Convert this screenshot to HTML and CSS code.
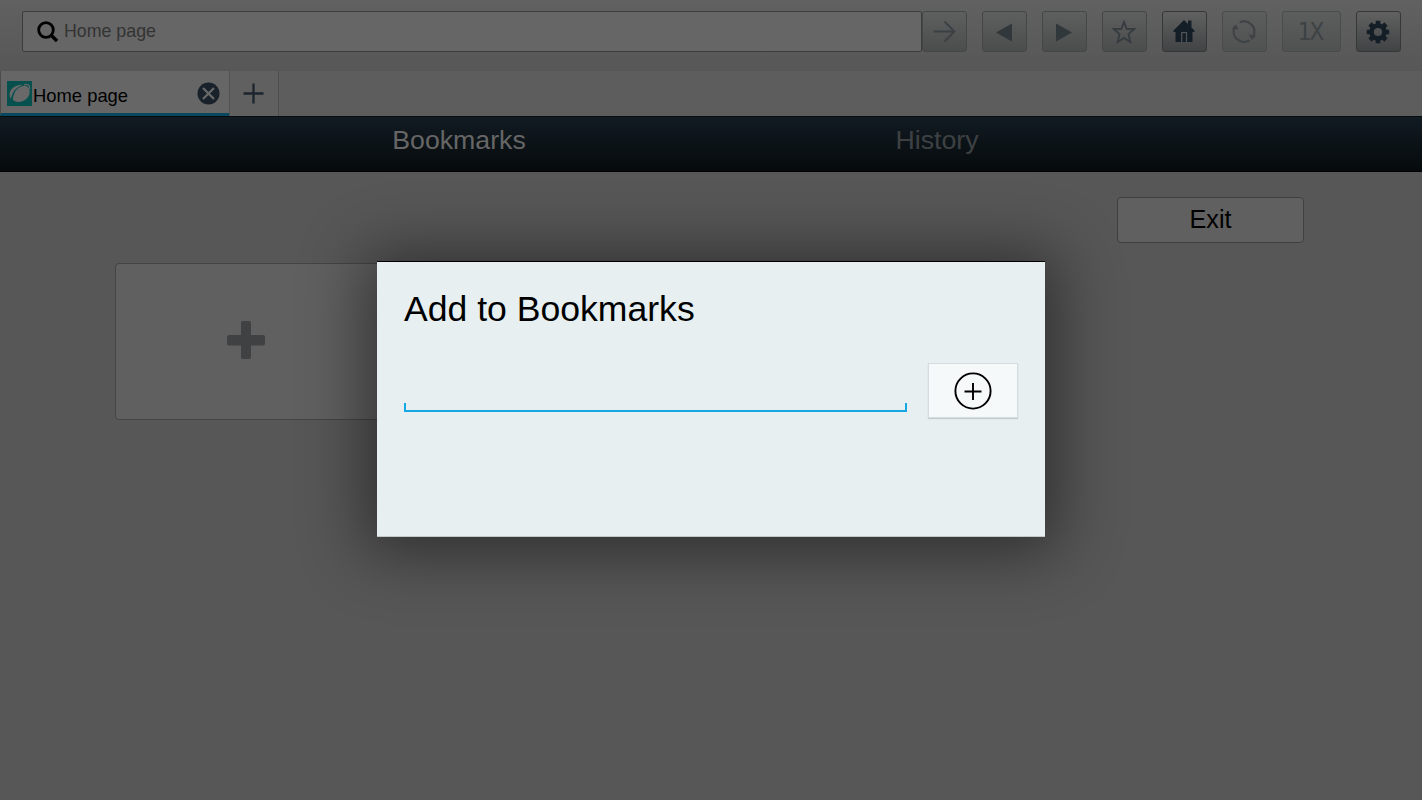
FILE: index.html
```
<!DOCTYPE html>
<html lang="en">
  <head>
    <meta charset="UTF-8" />
    <meta name="viewport" content="width=device-width, initial-scale=1.0" />
    <title>Home page</title>
    <link rel="stylesheet" href="styles.css">
  </head>
  <body>
    <header class="toolbar">
      <div class="address">
        <svg class="search-icon" width="22" height="22" viewBox="0 0 22 22">
          <circle cx="9" cy="9" r="7.3" fill="none" stroke="#000" stroke-width="2.8" />
          <path d="M14.5 14.5L20 20" stroke="#000" stroke-width="3.4" />
        </svg>
        <span>Home page</span>
      </div>
      <button class="btn go">
        <svg width="24" height="24" viewBox="0 0 24 24" fill="none" stroke="#3a4044" stroke-width="1.8">
          <path d="M1.5 11.5H22.5M12.5 1.5L22.5 11.5L12.5 21.5" />
        </svg>
      </button>
      <button class="btn">
        <svg width="18" height="20" viewBox="0 0 18 20"><path d="M1 10.5L17 1.5V19.5Z" fill="#31383c" /></svg>
      </button>
      <button class="btn">
        <svg width="18" height="20" viewBox="0 0 18 20"><path d="M17 10.5L1 1.5V19.5Z" fill="#31383c" /></svg>
      </button>
      <button class="btn">
        <svg width="26" height="26" viewBox="0 0 26 26" fill="none" stroke="#363c40" stroke-width="1.9">
          <path d="M13 3L15.7 10H23.3L17.5 15L19.3 23L13 19L6.7 23L8.5 15L2.7 10H10.3Z" />
        </svg>
      </button>
      <button class="btn active">
        <svg class="home" width="22" height="24" viewBox="0 0 22 24">
          <path d="M11 1L15 5V1.5H18.5V8.5L21.5 11.5V13H19.5V23H2.5V13H.5V11.5Z" fill="#141e26" />
          <path d="M8.7 23V13.7H13.5V23" fill="#141e26" stroke="#505152" stroke-width="1.3" />
        </svg>
      </button>
      <button class="btn off">
        <svg width="26" height="26" viewBox="0 0 26 26" fill="none" stroke="#3d4245" stroke-width="2">
          <path d="M8.7 3.3A10.3 10.3 0 0 1 22.6 16.5M18.5 21.3A10.3 10.3 0 0 1 3.4 8.8" />
          <path d="M17.8 15.2L25 17L20.7 20.8ZM.8 9.4L5 5.4L7.6 10.6Z" fill="#3d4245" stroke="none" />
        </svg>
      </button>
      <button class="btn off zoom">1X</button>
      <button class="btn active">
        <svg width="24" height="24" viewBox="0 0 24 24">
          <g stroke="#141e26" stroke-width="4.6">
            <path d="M12 .8V6M12 18V23.2M.8 12H6M18 12H23.2M4 4L8 8M16 16L20 20M20 4L16 8M8 16L4 20" />
          </g>
          <circle cx="12" cy="12" r="6.4" fill="none" stroke="#141e26" stroke-width="4.6" />
        </svg>
      </button>
    </header>

    <div class="tabs">
      <div class="tab">
        <svg class="favicon" width="25" height="25" viewBox="0 0 25 25">
          <rect width="25" height="25" fill="#06504e" />
          <path d="M6 19C6 11 11 5 18 4.8C24.5 6 24 15 18 19C14 21.5 9 21.5 6 19Z" fill="#696969" />
          <path d="M4 18C-.5 11 6 3.5 16 3.8C9 6.5 5 11 4 18Z" fill="#696969" />
          <path d="M17 4C20 2.8 23 3.5 22.6 8" fill="none" stroke="#696969" stroke-width="1.2" />
        </svg>
        <span class="tab-title">Home page</span>
        <svg class="close" width="23" height="23" viewBox="0 0 23 23">
          <circle cx="11.5" cy="11.5" r="11" fill="#19222b" />
          <path d="M6 6L17 17M17 6L6 17" stroke="#696969" stroke-width="2.2" />
        </svg>
      </div>
      <div class="new-tab">
        <svg width="21" height="21" viewBox="0 0 21 21"><path d="M.5 10.5H20.5M10.5 .5V20.5" stroke="#1c252e" stroke-width="2.3" /></svg>
      </div>
    </div>

    <nav class="nav">
      <span class="nav-item selected">Bookmarks</span>
      <span class="nav-item">History</span>
    </nav>

    <main class="content">
      <button class="exit">Exit</button>
      <div class="card">
        <svg width="38" height="38" viewBox="0 0 38 38" fill="#404142">
          <rect x="14" y="0" width="10" height="38" rx="2" />
          <rect x="0" y="14" width="38" height="10.5" rx="2" />
        </svg>
      </div>
    </main>

    <div class="overlay">
      <div class="dialog">
        <h1>Add to Bookmarks</h1>
        <div class="row">
          <div class="field"></div>
          <button class="add">
            <svg width="38" height="38" viewBox="0 0 38 38" fill="none" stroke="#000">
              <circle cx="19" cy="19" r="17.6" stroke-width="1.9" />
              <path d="M10.5 19.5H27.5M19 11V28" stroke-width="1.9" />
            </svg>
          </button>
        </div>
      </div>
    </div>
  </body>
</html>
```
FILE: styles.css
```
* {
  margin: 0;
  padding: 0;
  box-sizing: border-box;
}

body {
  height: 100vh;
  overflow: hidden;
  font-family: "Liberation Sans", Arial, sans-serif;
  background: #575757;
}

svg {
  display: block;
  flex: none;
}

.toolbar {
  display: flex;
  align-items: flex-start;
  gap: 15px;
  height: 71px;
  padding: 11px 21px 0 22px;
  background: linear-gradient(#616161, #575757);
}

.address {
  display: flex;
  align-items: center;
  flex: 1;
  height: 41px;
  padding-left: 14px;
  font-size: 17.8px;
  color: #333;
  background: #666;
  border: 1px solid #3c3c3c;
  border-radius: 2px;
}

.address span {
  margin: 0 0 1px 5px;
}

.btn {
  display: flex;
  align-items: center;
  justify-content: center;
  flex: none;
  width: 45px;
  height: 41px;
  padding-right: 2px;
  background: linear-gradient(#5e5f5f, #4b4d4d);
  border: 1px solid #454646;
  border-radius: 3px;
}

.go {
  margin-left: -15px;
}

.btn.active {
  background: linear-gradient(#616161, #414344);
  border-color: #363838;
}

.btn.off {
  background: linear-gradient(#5c5d5d, #505151);
  border-color: #4a4b4b;
}

.btn.zoom {
  width: 59px;
  padding: 1px 3px 0 0;
  font: 24px "DejaVu Sans Condensed", "DejaVu Sans", sans-serif;
  font-stretch: condensed;
  letter-spacing: -2px;
  color: #3d4245;
}

.home {
  margin-bottom: 2px;
}

.tabs {
  display: flex;
  height: 45px;
  background: #5d5d5d;
}

.tab {
  display: flex;
  align-items: center;
  width: 229px;
  padding: 0 9px 0 6px;
  background: #666;
  border-left: 1px solid #4c4c4c;
  border-bottom: 3px solid #07485f;
}

.favicon {
  margin-top: 2px;
}

.tab-title {
  flex: 1;
  margin: 8px 0 0 1px;
  font-size: 18.4px;
}

.close {
  margin-top: 3px;
}

.new-tab {
  display: flex;
  align-items: center;
  justify-content: center;
  width: 50px;
  padding: 0 2px 1px 0;
  background: #606060;
  border-left: 1px solid #505050;
  border-right: 1px solid #4e4e4e;
}

.nav {
  display: flex;
  height: 56px;
  padding: 0 246px 0 220px;
  background: linear-gradient(#111b22, #060a0c);
  border-top: 1px solid #060c11;
  border-bottom: 1px solid #000;
}

.nav-item {
  flex: 1;
  padding-top: 8px;
  font-size: 26.7px;
  line-height: 31px;
  text-align: center;
  color: #3e4143;
}

.nav-item.selected {
  color: #666;
}

.content {
  display: flex;
  flex-direction: column;
  padding: 25px 118px 0 115px;
}

.exit {
  align-self: flex-end;
  width: 187px;
  height: 46px;
  padding-bottom: 1px;
  font: 25.2px "Liberation Sans", Arial, sans-serif;
  background: #606060;
  border: 1px solid #404040;
  border-radius: 4px;
}

.card {
  display: flex;
  align-items: center;
  justify-content: center;
  width: 280px;
  height: 157px;
  margin-top: 20px;
  padding-right: 18px;
  padding-bottom: 3px;
  background: #606060;
  border: 1px solid #444;
  border-radius: 4px;
}

.overlay {
  position: absolute;
  inset: 0;
  display: flex;
  align-items: center;
  justify-content: center;
  padding-bottom: 2px;
}

.dialog {
  width: 668px;
  height: 276px;
  padding: 26px 27px 0;
  background: #e7eff1;
  border-top: 1px solid #000;
  border-bottom: 1px solid #c3c9ca;
  box-shadow: 0 4px 60px 12px rgba(0, 0, 0, 0.46);
}

.dialog h1 {
  font-size: 35.6px;
  font-weight: normal;
  line-height: 42px;
}

.row {
  display: flex;
  align-items: flex-start;
  justify-content: space-between;
  margin-top: 33px;
}

.field {
  width: 503px;
  height: 9px;
  margin-top: 40px;
  border: 2px solid #16a8e2;
  border-top: none;
}

.add {
  display: flex;
  align-items: center;
  justify-content: center;
  width: 90px;
  height: 55px;
  background: #f5f9fa;
  border: 1px solid #d6dddf;
  box-shadow: 0 1px 1px #c5cccd;
}
```
